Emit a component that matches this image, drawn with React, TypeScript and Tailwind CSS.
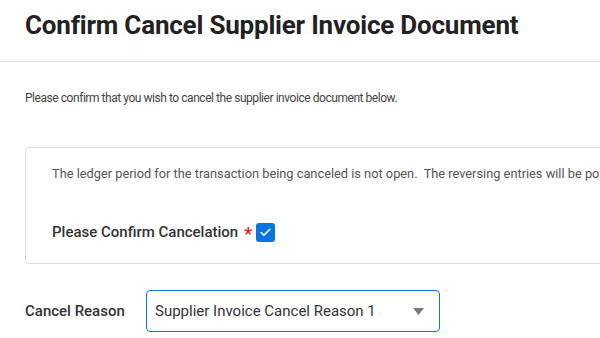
import { Check } from "lucide-react";

const App = () => {
  return (
    <div
      className="w-[600px] h-[338px] overflow-hidden bg-white text-[#333333]"
      style={{ fontFamily: "Roboto, 'Liberation Sans', sans-serif" }}
    >
      {/* Header */}
      <div className="h-[62px] border-b border-[#e6e6e6] px-[25px] pt-[9px]">
        <h1 className="text-[26px] font-bold leading-[32px] text-[#222222] tracking-[-0.2px] whitespace-nowrap">
          Confirm Cancel Supplier Invoice Document
        </h1>
      </div>

      <div className="pl-[25px] pt-[27px]">
        <p className="text-[12px] leading-[18px] text-[#444444] tracking-[-0.45px]">
          Please confirm that you wish to cancel the supplier invoice document below.
        </p>

        {/* Warning box */}
        <div className="mt-[40px] w-[600px] h-[117px] border border-[#dcdcdc] rounded-[4px] pl-[26px] pt-[17px] overflow-hidden">
          <p className="text-[12.8px] leading-[18px] text-[#555555] whitespace-nowrap">
            The ledger period for the transaction being canceled is not open.&nbsp; The reversing entries will be posted in the next open period.
          </p>
          <div className="mt-[38px] flex items-center">
            <span className="text-[15px] font-medium text-[#333333]">
              Please Confirm Cancelation
            </span>
            <span className="ml-[6px] text-[18px] leading-none text-[#e02020] font-medium mt-[4px]">*</span>
            <span className="ml-[4px] w-[19px] h-[19px] rounded-[3px] bg-[#0875e1] flex items-center justify-center">
              <Check size={13} strokeWidth={3} className="text-white" />
            </span>
          </div>
        </div>

        {/* Cancel reason */}
        <div className="mt-[26px] flex items-center">
          <span className="w-[121px] text-[15px] font-medium text-[#333333]">Cancel Reason</span>
          <div className="w-[294px] h-[42px] border border-[#0875e1] rounded-[4px] flex items-center justify-between pl-[8px] pr-[15px]">
            <span className="text-[15px] text-[#333333]">Supplier Invoice Cancel Reason 1</span>
            <svg width="11" height="7" viewBox="0 0 11 7">
              <path d="M0 0 H11 L5.5 7 Z" fill="#7b7b7b" />
            </svg>
          </div>
        </div>
      </div>
    </div>
  );
};

export default App;
